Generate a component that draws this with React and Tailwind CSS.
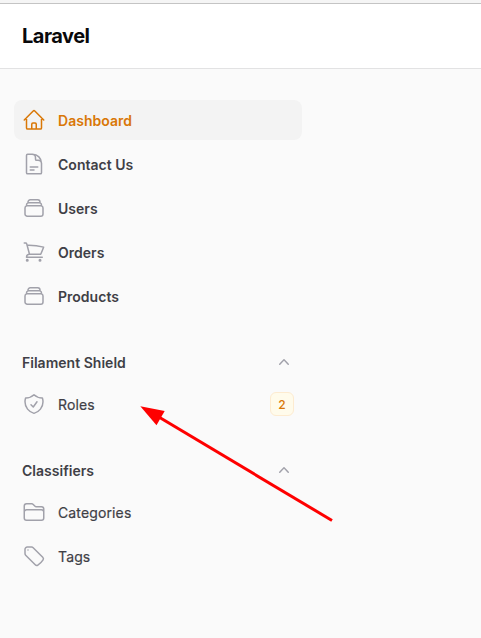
import { HiOutlineHome, HiOutlineDocumentText, HiOutlineShoppingCart, HiOutlineShieldCheck, HiOutlineFolder, HiOutlineTag, HiOutlineRectangleStack } from "react-icons/hi2";

const icons = { home: HiOutlineHome, doc: HiOutlineDocumentText, stack: HiOutlineRectangleStack, cart: HiOutlineShoppingCart, shield: HiOutlineShieldCheck, folder: HiOutlineFolder, tag: HiOutlineTag };

function Item({ icon, label, active, light, badge }) {
  const Icon = icons[icon];
  return (
    <a className={`flex h-10 items-center gap-3 rounded-lg px-2 ${active ? "bg-[#f3f3f3]" : ""}`}>
      <Icon className={`size-6 ${active ? "text-[#d97706]" : "text-[#a1a1aa]"}`} />
      <span className={`flex-1 pt-0.5 text-sm ${light ? "font-normal tracking-[0.13px] [-webkit-text-stroke:0.2px_#3f3f46]" : "font-semibold tracking-[0.02px]"} ${active ? "text-[#d97706]" : "text-[#3f3f46]"}`}>{label}</span>
      {badge && <span className="flex h-6 w-6 items-center justify-center rounded-md border border-[#fdebd0] bg-[#fffbeb] pt-px text-xs font-medium text-[#d97706]">{badge}</span>}
    </a>
  );
}

function Group({ label, children }) {
  return (
    <section className="flex flex-col gap-0.5">
      <div className="flex h-10 items-center justify-between px-2">
        <h2 className="pt-0.5 text-sm font-semibold tracking-[0.02px] text-[#3f3f46]">{label}</h2>
        <svg className="size-5 text-[#a1a1aa]" viewBox="0 0 20 20" fill="currentColor"><path fillRule="evenodd" d="M14.77 12.79a.75.75 0 01-1.06-.02L10 8.832 6.29 12.77a.75.75 0 11-1.08-1.04l4.25-4.5a.75.75 0 011.08 0l4.25 4.5a.75.75 0 01-.02 1.06z" /></svg>
      </div>
      <div className="flex flex-col gap-1">{children}</div>
    </section>
  );
}

export default function App() {
  return (
    <div className="relative h-[638px] w-[481px] overflow-hidden bg-[#fafafa] font-['Inter',sans-serif]">
      <div className="h-1 border-b border-[#c4c4c4] bg-[#f5f5f5]" />
      <header className="flex h-[65px] items-center border-b border-[#e2e2e3] bg-white pl-[22px]">
        <span className="text-xl leading-5 font-bold tracking-tight text-[#09090b]">Laravel</span>
      </header>
      <nav className="mt-[31px] ml-[14px] flex w-72 flex-col gap-[26px]">
        <div className="flex flex-col gap-1">
          <Item icon="home" label="Dashboard" active />
          <Item icon="doc" label="Contact Us" />
          <Item icon="stack" label="Users" />
          <Item icon="cart" label="Orders" />
          <Item icon="stack" label="Products" />
        </div>
        <Group label="Filament Shield"><Item icon="shield" label="Roles" light badge="2" /></Group>
        <Group label="Classifiers">
          <Item icon="folder" label="Categories" light />
          <Item icon="tag" label="Tags" light />
        </Group>
      </nav>
      <svg className="absolute inset-0 h-full w-full" viewBox="0 0 481 638">
        <path d="M332 520.5 158 416.5" stroke="#fe0000" strokeWidth="3" fill="none" />
        <path d="M140.3 406.3 164.7 411 156.5 425.2Z" fill="#fe0000" />
      </svg>
    </div>
  );
}
